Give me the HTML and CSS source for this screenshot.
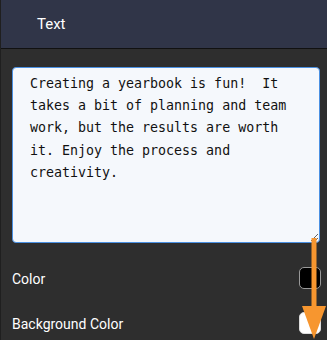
FILE: index.html
```html
<!DOCTYPE html>
<html>
<head>
<meta charset="utf-8">
<link rel="stylesheet" href="styles.css">
</head>
<body>
<div class="panel">
  <div class="header">Text</div>
  <div class="content">
    <textarea class="editor">Creating a yearbook is fun!  It takes a bit of planning and team work, but the results are worth it. Enjoy the process and creativity.</textarea>
    <div class="row"><span class="label">Color</span><span class="swatch black"></span></div>
    <div class="row"><span class="label">Background Color</span><span class="swatch white"></span></div>
  </div>
  <svg class="arrow" width="30" height="110" viewBox="0 0 30 110">
    <line x1="14" y1="0" x2="14" y2="75" stroke="#f7962f" stroke-width="5"/>
    <polygon points="2,68 26,68 14,101" fill="#f7962f"/>
  </svg>
</div>
</body>
</html>
```
FILE: styles.css
```css
html, body {
  margin: 0;
  padding: 0;
  background: #2e2e2e;
  overflow: hidden;
}
.panel {
  position: relative;
  width: 327px;
  height: 340px;
  border-left: 1px solid #1f1f1f;
  box-sizing: border-box;
  font-family: Roboto, "Liberation Sans", sans-serif;
}
.header {
  height: 48px;
  background: #303548;
  border-bottom: 1px solid #111;
  display: flex;
  align-items: center;
  padding-left: 36px;
  color: #fff;
  font-size: 15px;
}
.content {
  padding: 18px 6px 0 11px;
}
.editor {
  display: block;
  width: 308px;
  height: 176px;
  box-sizing: border-box;
  margin: 0;
  border: 1px solid #4a90e2;
  border-radius: 4px;
  background: #f5f8fc;
  color: #111;
  font-family: "DejaVu Sans Mono", monospace;
  font-size: 13.3px;
  line-height: 22.2px;
  padding: 5px 14px 0 17px;
  resize: both;
  outline: none;
}
.row {
  height: 45px;
  display: flex;
  align-items: center;
  justify-content: space-between;
}
.content .row:first-of-type {
  margin-top: 12px;
}
.label {
  color: #fff;
  font-size: 14px;
  padding-top: 3px;
}
.swatch {
  width: 22px;
  height: 22px;
  box-sizing: border-box;
  border-radius: 5px;
  border: 1px solid #999;
}
.swatch.black { background: #000; }
.swatch.white { background: #fff; border-color: #ddd; }
.arrow {
  position: absolute;
  left: 299px;
  top: 238px;
}
```
